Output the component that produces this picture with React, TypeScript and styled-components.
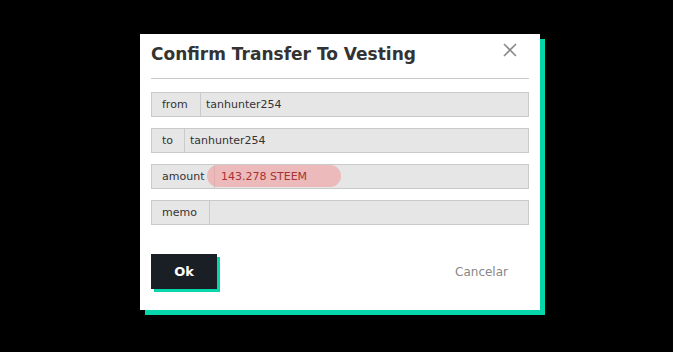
import React from "react";
import styled, { createGlobalStyle } from "styled-components";

const Global = createGlobalStyle`
  html, body { margin: 0; padding: 0; background: #000; }
  body { font-family: "DejaVu Sans", sans-serif; }
`;

const Stage = styled.div`
  width: 673px;
  height: 352px;
  background: #000;
  display: flex;
  align-items: flex-start;
  padding: 34px 0 0 140px;
  box-sizing: border-box;
`;

const Dialog = styled.div`
  width: 400px;
  height: 276px;
  background: #fff;
  box-shadow: 5px 5px 0 0 #06d6a9;
  box-sizing: border-box;
  padding: 0 11px;
  display: flex;
  flex-direction: column;
  position: relative;
`;

const Header = styled.div`
  display: flex;
  align-items: flex-start;
  justify-content: space-between;
  border-bottom: 1px solid #c8c8c8;
  height: 36px;
  padding-top: 8px;
  box-sizing: content-box;
`;

const Title = styled.h1`
  margin: 0;
  font-family: "DejaVu Sans", sans-serif;
  font-weight: bold;
  font-size: 17px;
  line-height: 24px;
  color: #333;
`;

const Close = styled.button`
  border: 0;
  background: none;
  padding: 0;
  margin: 1px 12px 0 0;
  width: 14px;
  height: 14px;
  cursor: pointer;
  display: block;
`;

const Rows = styled.div`
  display: flex;
  flex-direction: column;
  gap: 11px;
  margin-top: 13px;
`;

const Group = styled.div`
  display: flex;
  height: 25px;
  border: 1px solid #cacaca;
  background: #e6e6e6;
  box-sizing: border-box;
  font-size: 11px;
  color: #333;
`;

const Label = styled.div<{ $w: number }>`
  width: ${(p) => p.$w}px;
  box-sizing: border-box;
  border-right: 1px solid #cacaca;
  display: flex;
  align-items: center;
  padding-left: 10px;
  flex-shrink: 0;
`;

const Value = styled.div`
  flex: 1;
  display: flex;
  align-items: center;
  padding-left: 5px;
  position: relative;
`;

const Pill = styled.span`
  position: absolute;
  left: -8px;
  top: 0px;
  height: 22px;
  width: 134px;
  border-radius: 11px;
  background: rgba(240, 150, 150, 0.55);
  color: #a83232;
  display: flex;
  align-items: center;
  padding-left: 14px;
  box-sizing: border-box;
`;

const Footer = styled.div`
  display: flex;
  justify-content: space-between;
  align-items: center;
  margin-top: 29px;
`;

const OkButton = styled.button`
  width: 66px;
  height: 35px;
  background: #1a1f26;
  color: #fff;
  border: 0;
  font-family: "DejaVu Sans", sans-serif;
  font-weight: bold;
  font-size: 13px;
  box-shadow: 3px 3px 0 0 #06d6a9;
  cursor: pointer;
`;

const CancelButton = styled.button`
  border: 0;
  background: none;
  color: #888;
  font-family: "DejaVu Sans", sans-serif;
  font-size: 12px;
  margin-right: 15px;
  cursor: pointer;
`;

const rows: { label: string; w: number; value?: string; pill?: boolean }[] = [
  { label: "from", w: 49, value: "tanhunter254" },
  { label: "to", w: 33, value: "tanhunter254" },
  { label: "amount", w: 63, value: "143.278 STEEM", pill: true },
  { label: "memo", w: 58 },
];

export default function App() {
  return (
    <>
      <Global />
      <Stage>
        <Dialog>
          <Header>
            <Title>Confirm Transfer To Vesting</Title>
            <Close aria-label="close">
              <svg width="14" height="14" viewBox="0 0 14 14">
                <path d="M1 1L13 13M13 1L1 13" stroke="#8a8a8a" strokeWidth="1.6" />
              </svg>
            </Close>
          </Header>
          <Rows>
            {rows.map((r) => (
              <Group key={r.label}>
                <Label $w={r.w}>{r.label}</Label>
                <Value>{r.pill ? <Pill>{r.value}</Pill> : r.value}</Value>
              </Group>
            ))}
          </Rows>
          <Footer>
            <OkButton>Ok</OkButton>
            <CancelButton>Cancelar</CancelButton>
          </Footer>
        </Dialog>
      </Stage>
    </>
  );
}
